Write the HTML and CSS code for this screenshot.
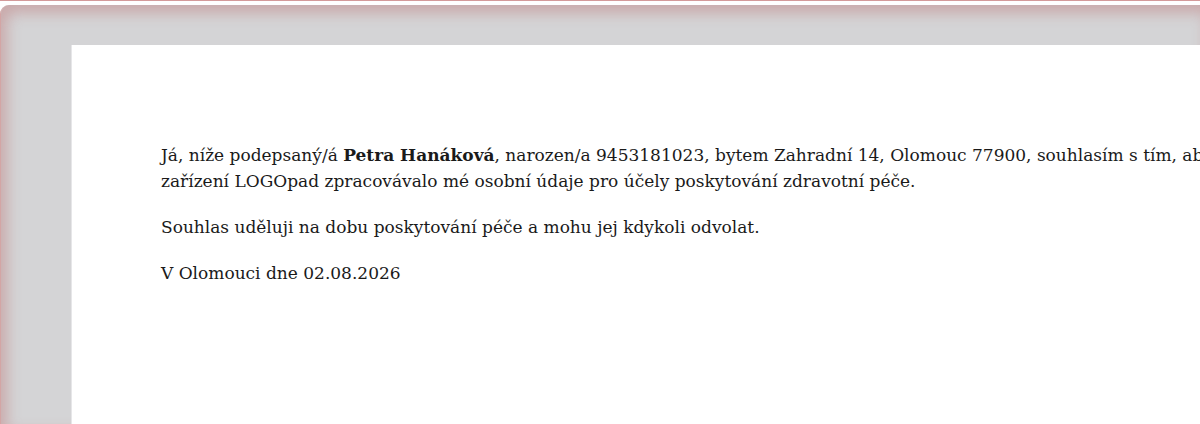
FILE: index.html
```html
<!DOCTYPE html>
<html lang="cs">
<head>
  <meta charset="UTF-8" />
  <title>Souhlas se zpracováním osobních údajů</title>
  <link rel="stylesheet" href="styles.css">
</head>
<body>
  <div id="viewer">
    <div class="page">
      <p>Já, níže podepsaný/á <strong>Petra Hanáková</strong>, narozen/a 9453181023, bytem Zahradní 14, Olomouc 77900, souhlasím s tím, aby zdravotnické zařízení LOGOpad zpracovávalo mé osobní údaje pro účely poskytování zdravotní péče.</p>
      <p>Souhlas uděluji na dobu poskytování péče a mohu jej kdykoli odvolat.</p>
      <p>V Olomouci dne 02.08.2026</p>
    </div>
  </div>
</body>
</html>
```

FILE: styles.css
```css
html, body {
  margin: 0;
  padding: 0;
  height: 100%;
  overflow: hidden;
  background: #fff;
}
body {
  border-top: 1px solid #d49a9a;
  box-sizing: border-box;
  padding-top: 4px;
}
#viewer {
  height: 100%;
  box-sizing: border-box;
  padding: 40px 0 0 70px;
  background: #d4d4d6;
  border-radius: 9px 0 0 0;
  border-left: 1px solid #d3a5a5;
  box-shadow: inset 6px 8px 14px rgba(190, 120, 120, 0.45);
  overflow: hidden;
}
.page {
  width: 1500px;
  min-height: 600px;
  box-sizing: border-box;
  padding: 97px 0 0 89px;
  background: #fff;
  border-left: 1px solid #e6e6e8;
  font-family: "DejaVu Serif", serif;
  font-size: 17px;
  line-height: 26px;
  color: #1a1a1a;
}
.page p {
  margin: 0 0 20px;
  width: 1200px;
}
```
